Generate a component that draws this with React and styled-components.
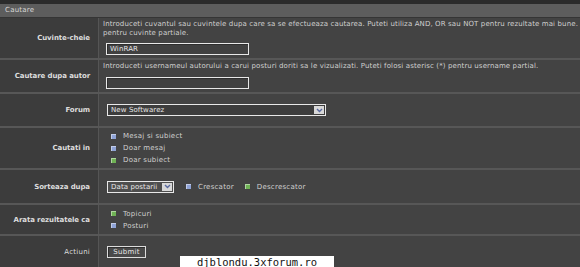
import styled, { createGlobalStyle } from "styled-components";

const Global = createGlobalStyle`
  html, body { margin: 0; padding: 0; background: #434343; }
  body { font-family: "DejaVu Sans", Verdana, sans-serif; font-size: 7px; letter-spacing: 0.24px; color: #cfcfcf; overflow: hidden; }
`;

const Page = styled.div`
  position: relative;
  width: 580px;
  height: 267px;
  background: #434343;
  overflow: hidden;
`;

const TopStrip = styled.div`
  height: 4px;
  background: #2b2b2b;
`;

const Header = styled.div`
  height: 13px;
  line-height: 13px;
  padding-left: 5px;
  background: #5d5d5d;
  color: #d6d6d6;
  border-bottom: 1px solid #353535;
`;

const Row = styled.div`
  display: grid;
  grid-template-columns: 99px 1fr;
  height: ${(p) => p.$h}px;
  border-top: ${(p) => (p.$first ? "none" : "2px solid #575757")};
`;

const Label = styled.div`
  display: flex;
  align-items: center;
  justify-content: flex-end;
  padding-right: 8px;
  background: #3c3c3c;
  border-right: 1px solid #555;
  font-weight: ${(p) => (p.$plain ? "normal" : "bold")};
  letter-spacing: ${(p) => (p.$plain ? "0.24px" : "-0.1px")};
  color: #dcdcdc;
`;

const Field = styled.div`
  display: flex;
  flex-direction: column;
  justify-content: ${(p) => p.$align || "center"};
  padding: ${(p) => p.$pad || "0 0 0 4px"};
  gap: ${(p) => p.$gap || 0}px;
  min-width: 0;
`;

const Help = styled.div`
  line-height: 9px;
  letter-spacing: 0.12px;
  margin-right: -4px;
`;

const TextInput = styled.div`
  width: 138px;
  height: 10px;
  margin-left: 3px;
  border: 1px solid #e8e8e8;
  box-shadow: inset 1px 1px 0 #2e2e2e;
  background: #414141;
  color: #e6e6e6;
  line-height: 10px;
  padding-left: 3px;
  letter-spacing: 0.1px;
`;

const Select = styled.div`
  display: flex;
  align-items: center;
  width: ${(p) => p.$w}px;
  height: 10px;
  margin-left: 4px;
  border: 1px solid #e8e8e8;
  background: ${(p) => p.$bg || "#3d3d3d"};
  color: #e6e6e6;
  padding-left: 3px;
  box-sizing: content-box;
`;

const SelectText = styled.span`
  flex: 1;
  line-height: 10px;
  white-space: nowrap;
  overflow: hidden;
  letter-spacing: 0.1px;
`;

const Arrow = styled.span`
  flex: none;
  width: 10px;
  height: 8px;
  margin-right: 1px;
  background: #d8d8d8;
  display: flex;
  align-items: center;
  justify-content: center;
`;

const Option = styled.div`
  display: flex;
  align-items: center;
  gap: 7px;
  padding-left: ${(p) => (p.$tight ? 7 : 8)}px;
  line-height: 12px;
`;

const Dot = styled.span`
  width: 5px;
  height: 5px;
  background: ${(p) => (p.$green ? "#6fb255" : "#8fa3d6")};
  box-shadow: inset 1px 1px 0 rgba(255, 255, 255, 0.45);
`;

const Inline = styled.div`
  display: flex;
  align-items: center;
  gap: 4px;
`;

const Button = styled.div`
  width: 37px;
  height: 10px;
  margin-left: 4px;
  border: 1px solid #dcdcdc;
  box-shadow: inset 1px 1px 0 #2e2e2e;
  background: #4a4a4a;
  color: #e6e6e6;
  text-align: center;
  line-height: 10px;
`;

const Watermark = styled.div`
  position: absolute;
  left: 180px;
  top: 256px;
  width: 154px;
  height: 14px;
  background: #fff;
  color: #111;
  font-family: "DejaVu Sans Mono", "Liberation Mono", monospace;
  font-size: 10.5px;
  letter-spacing: 0;
  line-height: 12px;
  text-align: center;
`;

const Chevron = () => (
  <svg width="7" height="5" viewBox="0 0 7 5">
    <path d="M1 1 L3.5 3.5 L6 1" stroke="#5a6aa0" strokeWidth="1.4" fill="none" />
  </svg>
);

export default function App() {
  return (
    <Page>
      <Global />
      <TopStrip />
      <Header>Cautare</Header>
      <Row $h={40} $first>
        <Label>Cuvinte-cheie</Label>
        <Field $align="flex-start" $pad="2px 0 0 4px" $gap={5}>
          <Help>
            Introduceti cuvantul sau cuvintele dupa care sa se efectueaza cautarea. Puteti utiliza AND, OR sau NOT pentru rezultate mai bune. pentru cuvinte partiale.
          </Help>
          <TextInput>WinRAR</TextInput>
        </Field>
      </Row>
      <Row $h={32}>
        <Label>Cautare dupa autor</Label>
        <Field $align="flex-start" $pad="2px 0 0 4px" $gap={6}>
          <Help>
            Introduceti usernameul autorului a carui posturi doriti sa le vizualizati. Puteti folosi asterisc (*) pentru username partial.
          </Help>
          <TextInput />
        </Field>
      </Row>
      <Row $h={32}>
        <Label>Forum</Label>
        <Field>
          <Select $w={214}>
            <SelectText>New Softwarez</SelectText>
            <Arrow>
              <Chevron />
            </Arrow>
          </Select>
        </Field>
      </Row>
      <Row $h={40}>
        <Label>Cautati in</Label>
        <Field>
          <Option>
            <Dot />
            Mesaj si subiect
          </Option>
          <Option>
            <Dot />
            Doar mesaj
          </Option>
          <Option>
            <Dot $green />
            Doar subiect
          </Option>
        </Field>
      </Row>
      <Row $h={33}>
        <Label>Sorteaza dupa</Label>
        <Field>
          <Inline>
            <Select $w={62} $bg="#4e4e4e">
              <SelectText>Data postarii</SelectText>
              <Arrow>
                <Chevron />
              </Arrow>
            </Select>
            <Option>
              <Dot />
              Crescator
            </Option>
            <Option $tight>
              <Dot $green />
              Descrescator
            </Option>
          </Inline>
        </Field>
      </Row>
      <Row $h={29}>
        <Label>Arata rezultatele ca</Label>
        <Field>
          <Option>
            <Dot $green />
            Topicuri
          </Option>
          <Option>
            <Dot />
            Posturi
          </Option>
        </Field>
      </Row>
      <Row $h={32}>
        <Label $plain>Actiuni</Label>
        <Field>
          <Button>Submit</Button>
        </Field>
      </Row>
      <Watermark>djblondu.3xforum.ro</Watermark>
    </Page>
  );
}
